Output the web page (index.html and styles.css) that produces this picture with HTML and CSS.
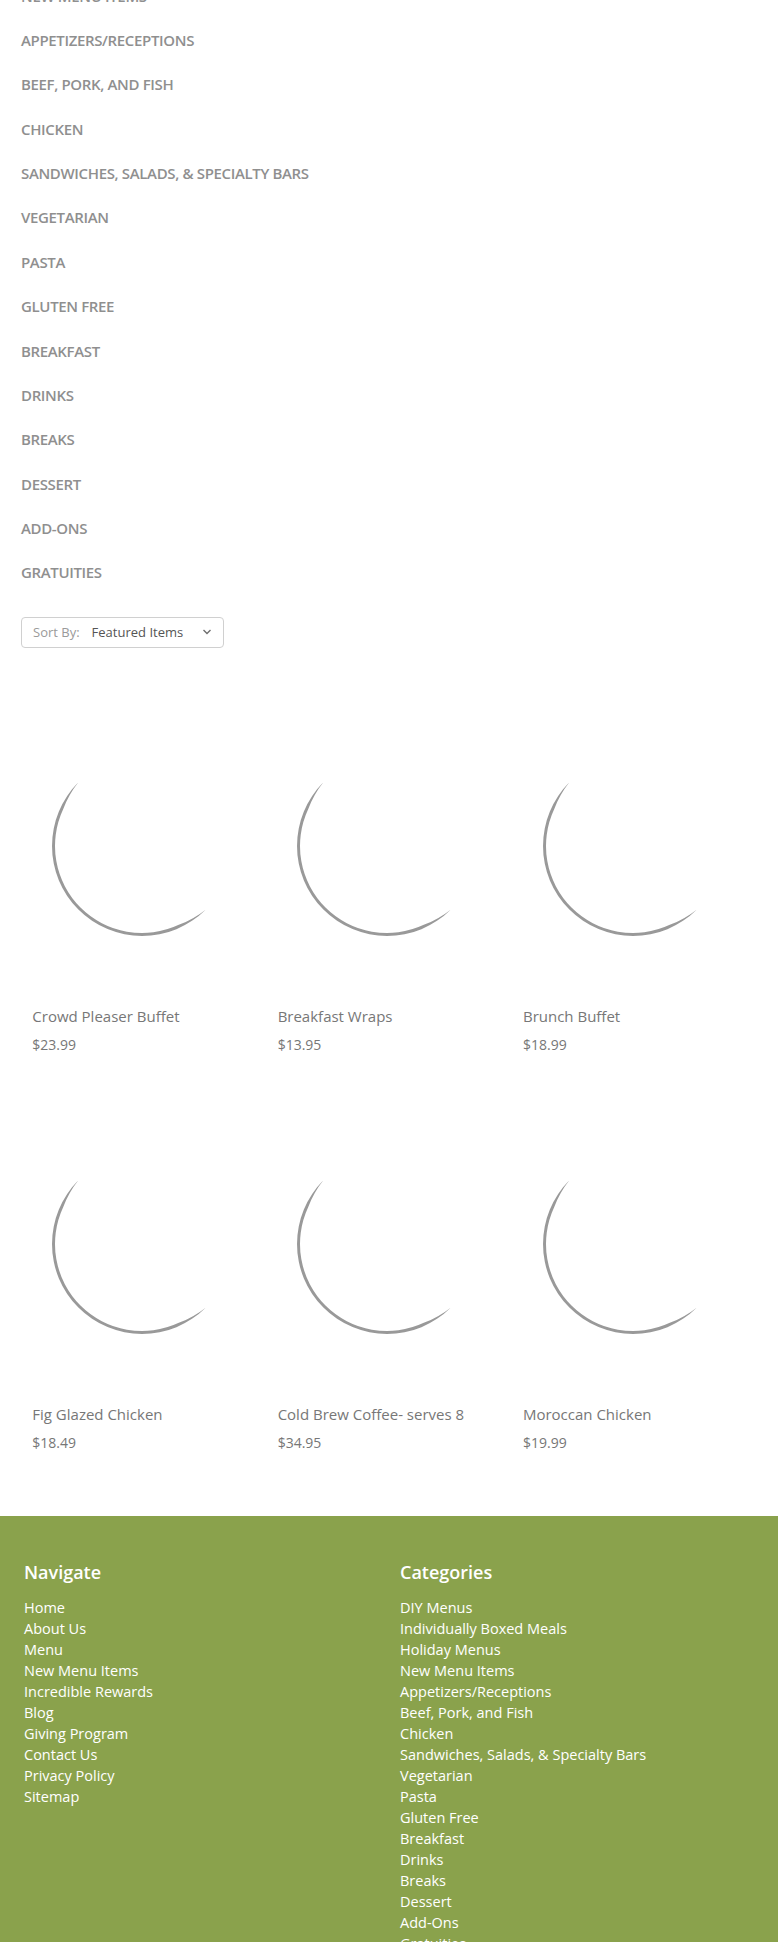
FILE: index.html
```
<!DOCTYPE html>
<html lang="en">
<head>
<meta charset="utf-8">
<title>Menu</title>
<link rel="stylesheet" href="styles.css">
</head>
<body>
<main class="page">
  <ul class="cat-list">
    <li class="cat-item">NEW MENU ITEMS</li>
    <li class="cat-item">APPETIZERS/RECEPTIONS</li>
    <li class="cat-item">BEEF, PORK, AND FISH</li>
    <li class="cat-item">CHICKEN</li>
    <li class="cat-item">SANDWICHES, SALADS, &amp; SPECIALTY BARS</li>
    <li class="cat-item">VEGETARIAN</li>
    <li class="cat-item">PASTA</li>
    <li class="cat-item">GLUTEN FREE</li>
    <li class="cat-item">BREAKFAST</li>
    <li class="cat-item">DRINKS</li>
    <li class="cat-item">BREAKS</li>
    <li class="cat-item">DESSERT</li>
    <li class="cat-item">ADD-ONS</li>
    <li class="cat-item">GRATUITIES</li>
  </ul>

  <div class="sort-box">
    <span class="sort-label">Sort By:</span>
    <span class="sort-value">Featured Items</span>
    <svg class="sort-chevron" width="10" height="6" viewBox="0 0 10 6"><polyline points="1.5,1 5,4.5 8.5,1" fill="none" stroke="#6f6f6f" stroke-width="1.4"/></svg>
  </div>

  <section class="product-grid">
    <article class="card">
      <div class="card-img"><svg class="spinner" width="200" height="200" viewBox="0 0 200 200"><path d="M36.36,36.36 A90,90 0 0 0 163.64,163.64 Q151.34,173.32 136.77,178.85 A87,87 0 0 1 21.15,63.23 Q26.68,48.66 36.36,36.36 Z" fill="#999"/></svg></div>
      <div class="card-body"><h3 class="card-title">Crowd Pleaser Buffet</h3><p class="card-price">$23.99</p></div>
    </article>
    <article class="card">
      <div class="card-img"><svg class="spinner" width="200" height="200" viewBox="0 0 200 200"><path d="M36.36,36.36 A90,90 0 0 0 163.64,163.64 Q151.34,173.32 136.77,178.85 A87,87 0 0 1 21.15,63.23 Q26.68,48.66 36.36,36.36 Z" fill="#999"/></svg></div>
      <div class="card-body"><h3 class="card-title">Breakfast Wraps</h3><p class="card-price">$13.95</p></div>
    </article>
    <article class="card">
      <div class="card-img"><svg class="spinner" width="200" height="200" viewBox="0 0 200 200"><path d="M36.36,36.36 A90,90 0 0 0 163.64,163.64 Q151.34,173.32 136.77,178.85 A87,87 0 0 1 21.15,63.23 Q26.68,48.66 36.36,36.36 Z" fill="#999"/></svg></div>
      <div class="card-body"><h3 class="card-title">Brunch Buffet</h3><p class="card-price">$18.99</p></div>
    </article>
    <article class="card">
      <div class="card-img"><svg class="spinner" width="200" height="200" viewBox="0 0 200 200"><path d="M36.36,36.36 A90,90 0 0 0 163.64,163.64 Q151.34,173.32 136.77,178.85 A87,87 0 0 1 21.15,63.23 Q26.68,48.66 36.36,36.36 Z" fill="#999"/></svg></div>
      <div class="card-body"><h3 class="card-title">Fig Glazed Chicken</h3><p class="card-price">$18.49</p></div>
    </article>
    <article class="card">
      <div class="card-img"><svg class="spinner" width="200" height="200" viewBox="0 0 200 200"><path d="M36.36,36.36 A90,90 0 0 0 163.64,163.64 Q151.34,173.32 136.77,178.85 A87,87 0 0 1 21.15,63.23 Q26.68,48.66 36.36,36.36 Z" fill="#999"/></svg></div>
      <div class="card-body"><h3 class="card-title">Cold Brew Coffee- serves 8</h3><p class="card-price">$34.95</p></div>
    </article>
    <article class="card">
      <div class="card-img"><svg class="spinner" width="200" height="200" viewBox="0 0 200 200"><path d="M36.36,36.36 A90,90 0 0 0 163.64,163.64 Q151.34,173.32 136.77,178.85 A87,87 0 0 1 21.15,63.23 Q26.68,48.66 36.36,36.36 Z" fill="#999"/></svg></div>
      <div class="card-body"><h3 class="card-title">Moroccan Chicken</h3><p class="card-price">$19.99</p></div>
    </article>
  </section>
</main>

<footer class="footer">
  <div class="footer-col">
    <h4 class="footer-heading">Navigate</h4>
    <ul class="footer-links">
      <li>Home</li>
      <li>About Us</li>
      <li>Menu</li>
      <li>New Menu Items</li>
      <li>Incredible Rewards</li>
      <li>Blog</li>
      <li>Giving Program</li>
      <li>Contact Us</li>
      <li>Privacy Policy</li>
      <li>Sitemap</li>
    </ul>
  </div>
  <div class="footer-col">
    <h4 class="footer-heading">Categories</h4>
    <ul class="footer-links">
      <li>DIY Menus</li>
      <li>Individually Boxed Meals</li>
      <li>Holiday Menus</li>
      <li>New Menu Items</li>
      <li>Appetizers/Receptions</li>
      <li>Beef, Pork, and Fish</li>
      <li>Chicken</li>
      <li>Sandwiches, Salads, &amp; Specialty Bars</li>
      <li>Vegetarian</li>
      <li>Pasta</li>
      <li>Gluten Free</li>
      <li>Breakfast</li>
      <li>Drinks</li>
      <li>Breaks</li>
      <li>Dessert</li>
      <li>Add-Ons</li>
      <li>Gratuities</li>
    </ul>
  </div>
</footer>
</body>
</html>
```

FILE: styles.css
```
* { box-sizing: border-box; }

html, body {
  margin: 0;
  padding: 0;
  background: #fff;
  font-family: "Open Sans", "Noto Sans", "DejaVu Sans", sans-serif;
}

.page {
  padding: 0 21px;
}

.cat-list {
  list-style: none;
  margin: -26.6px 0 0;
  padding: 0;
}

.cat-item {
  font-size: 15px;
  font-weight: 600;
  letter-spacing: -0.35px;
  line-height: 24px;
  padding: 10.2px 0;
  color: #8f8f8f;
}

.sort-box {
  margin-top: 22.3px;
  width: 203px;
  height: 31px;
  border: 1px solid #d0d0d0;
  border-radius: 4px;
  display: flex;
  align-items: center;
  padding: 0 11px;
  font-size: 13px;
}

.sort-label {
  color: #9a9a9a;
}

.sort-value {
  color: #555;
  margin-left: 12px;
}

.sort-chevron {
  margin-left: auto;
  margin-right: 0;
}

.product-grid {
  display: grid;
  grid-template-columns: repeat(3, 1fr);
  row-gap: 68.3px;
  margin-top: 76.7px;
  padding-bottom: 62.7px;
}

.card-img {
  width: 242px;
  height: 242px;
  display: flex;
  align-items: center;
  justify-content: center;
}

.card-body {
  padding: 39px 0 0 11.3px;
}

.card-title {
  margin: 0;
  font-size: 15px;
  font-weight: 400;
  line-height: 20px;
  color: #777;
}

.card-price {
  margin: 9px 0 0;
  font-size: 14px;
  line-height: 20px;
  color: #777;
}

.footer {
  background: #8aa24c;
  padding: 44px 0 40px 24px;
  display: grid;
  grid-template-columns: 376px 1fr;
  color: #fff;
}

.footer-heading {
  margin: 0;
  font-size: 18px;
  font-weight: 600;
  line-height: 24px;
  color: #fff;
}

.footer-links {
  list-style: none;
  margin: 13.5px 0 0;
  padding: 0;
  font-size: 14.5px;
  line-height: 21px;
}
```
